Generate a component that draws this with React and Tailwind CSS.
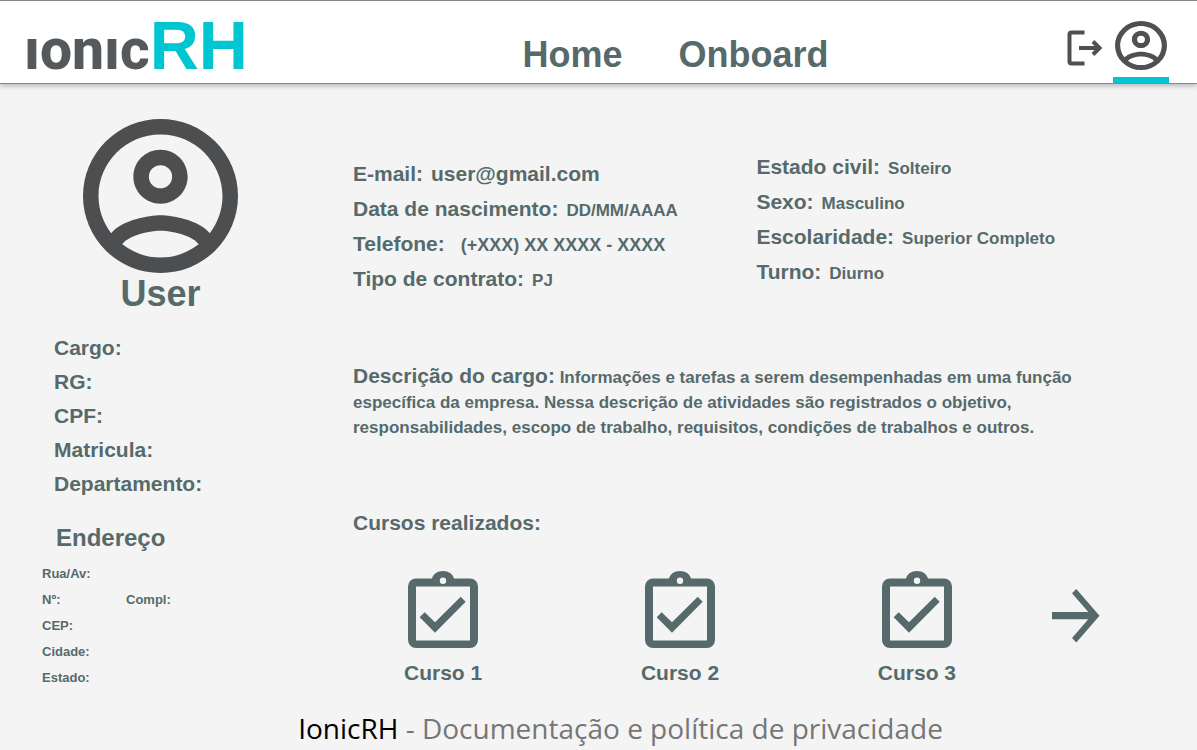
const profileFields = ["Cargo:", "RG:", "CPF:", "Matricula:", "Departamento:"];

const personal = [
  { label: "E-mail:", value: "user@gmail.com", large: true },
  { label: "Data de nascimento:", value: "DD/MM/AAAA" },
  { label: "Telefone:", value: "(+XXX) XX XXXX - XXXX", spaced: true },
  { label: "Tipo de contrato:", value: "PJ" },
];

const social = [
  { label: "Estado civil:", value: "Solteiro" },
  { label: "Sexo:", value: "Masculino" },
  { label: "Escolaridade:", value: "Superior Completo" },
  { label: "Turno:", value: "Diurno" },
];

const courses = ["Curso 1", "Curso 2", "Curso 3"];

function AccountIcon({ className }) {
  return (
    <svg viewBox="2 2 20 20" preserveAspectRatio="none" className={className} fill="currentColor" aria-hidden="true">
      <path d="M12 2A10 10 0 0 0 2 12A10 10 0 0 0 12 22A10 10 0 0 0 22 12A10 10 0 0 0 12 2M7.07 18.28C7.5 17.38 10.12 16.5 12 16.5C13.88 16.5 16.5 17.38 16.93 18.28C15.57 19.36 13.86 20 12 20C10.14 20 8.43 19.36 7.07 18.28M18.36 16.83C16.93 15.09 13.46 14.5 12 14.5C10.54 14.5 7.07 15.09 5.64 16.83C4.62 15.5 4 13.82 4 12C4 7.59 7.59 4 12 4C16.41 4 20 7.59 20 12C20 13.82 19.38 15.5 18.36 16.83M12 6C10.06 6 8.5 7.56 8.5 9.5C8.5 11.44 10.06 13 12 13C13.94 13 15.5 11.44 15.5 9.5C15.5 7.56 13.94 6 12 6M12 11A1.5 1.5 0 0 1 10.5 9.5A1.5 1.5 0 0 1 12 8A1.5 1.5 0 0 1 13.5 9.5A1.5 1.5 0 0 1 12 11Z" />
    </svg>
  );
}

function LogoutIcon() {
  return (
    <svg viewBox="0 0 36 36" className="h-9 w-9" fill="none" stroke="currentColor" strokeWidth="4" aria-hidden="true">
      <path d="M17.500 2.500H4.500Q2.500 2.500 2.500 4.500V31.500Q2.500 33.500 4.500 33.500H17.500" />
      <path d="M12 18H32M26 11.500L32.500 18L26 24.500" />
    </svg>
  );
}

function ClipboardIcon() {
  return (
    <svg viewBox="0 0 70 78" className="h-[78px] w-[70px]" fill="currentColor" aria-hidden="true">
      <path
        fillRule="evenodd"
        d="M8 7.500H24C25 3 29.500 0 35 0S45 3 46 7.500H62A8 8 0 0 1 70 15.500V69A8 8 0 0 1 62 77H8A8 8 0 0 1 0 69V15.500A8 8 0 0 1 8 7.500ZM8 15.500V69.500H62V15.500ZM35 6.600A3.200 3.200 0 1 0 35 13A3.200 3.200 0 1 0 35 6.600Z"
      />
      <path d="M11.700 46.300L16.700 41.300L27 51.300L52.700 25.700L57.700 30.700L27 61.700Z" />
    </svg>
  );
}

function ArrowIcon() {
  return (
    <svg viewBox="0 0 48 54" className="h-[54px] w-12" fill="currentColor" aria-hidden="true">
      <path d="M0 23H36.300L20 4.300L24.300 0L47.500 26.700L24.300 53.400L20 49L36.300 30.300H0Z" />
    </svg>
  );
}

function Details({ items }) {
  return (
    <dl className="flex flex-col">
      {items.map((item) => (
        <div key={item.label} className="flex h-[35px] items-baseline gap-2">
          <dt className="text-[21px] leading-9">{item.label}</dt>
          <dd className={item.large ? "text-[21px]" : item.spaced ? "pl-2 text-[18px]" : "text-[17px]"}>{item.value}</dd>
        </div>
      ))}
    </dl>
  );
}

export default function App() {
  return (
    <div className="flex min-h-screen flex-col bg-[#f4f4f4] font-['Liberation_Sans',Arial,sans-serif] font-bold text-[#566a6b]">
      <header className="flex h-[84px] items-center border-y border-t-[#888] border-b-[#888] bg-white pr-7 pl-6 shadow-[0_2px_5px_rgba(0,0,0,0.25)]">
        <a href="#home" aria-label="ionicRH" className="flex items-baseline pt-1.5 leading-none">
          <span className="font-[Roboto,sans-serif] text-[57px] font-extrabold text-[#55595c]">ıonıc</span>
          <span className="text-[68px] text-[#00c6d1]">RH</span>
        </a>
        <nav className="flex flex-1 justify-center gap-14 pt-[26px] pl-9 text-[36px] leading-none">
          <a href="#home">Home</a>
          <a href="#onboard">Onboard</a>
        </nav>
        <div className="flex items-center gap-2.5 self-stretch text-[#4f5052]">
          <button type="button" aria-label="Sair" className="pt-3">
            <LogoutIcon />
          </button>
          <button type="button" aria-label="Perfil" className="flex w-14 flex-col items-center self-stretch border-b-[6px] border-[#00c6d1] pt-5">
            <AccountIcon className="h-[49px] w-[52px] text-[#4f5052]" />
          </button>
        </div>
      </header>

      <div className="flex flex-1">
        <aside className="w-[353px] shrink-0 pt-[35px] pl-[42px]">
          <div className="flex w-[237px] flex-col items-center">
            <AccountIcon className="h-[154px] w-[155px] text-[#4d4e50]" />
            <h1 className="text-[36px] leading-[42px]">User</h1>
          </div>
          <ul className="pt-4 pl-3 text-[21px] leading-[34px]">
            {profileFields.map((field) => (
              <li key={field}>{field}</li>
            ))}
          </ul>
          <h2 className="pt-[21px] pl-3.5 text-2xl leading-8">Endereço</h2>
          <ul className="pt-[7px] text-[13px] leading-[26px]">
            <li>Rua/Av:</li>
            <li className="flex">
              <span className="w-[84px]">Nº:</span>
              <span>Compl:</span>
            </li>
            <li>CEP:</li>
            <li>Cidade:</li>
            <li>Estado:</li>
          </ul>
        </aside>

        <main className="flex-1 pr-[97px]">
          <section className="grid grid-cols-[54%_46%] pt-[65px]">
            <div className="pt-[7px]">
              <Details items={personal} />
            </div>
            <Details items={social} />
          </section>
          <section className="pt-[67px]">
            <p className="text-[17px] leading-[25px]">
              <strong className="text-[21px] leading-[25px]">Descrição do cargo:</strong> Informações e tarefas a
              serem desempenhadas em uma função específica da empresa. Nessa descrição de atividades são registrados o
              objetivo, responsabilidades, escopo de trabalho, requisitos, condições de trabalhos e outros.
            </p>
          </section>
          <section className="pt-[69px]">
            <h2 className="text-[21px] leading-7">Cursos realizados:</h2>
            <div className="flex items-start pt-[34px] pl-[51px]">
              <ul className="flex flex-1 justify-between">
                {courses.map((course) => (
                  <li key={course} className="flex flex-col items-center gap-2.5 text-[21px] leading-7">
                    <ClipboardIcon />
                    {course}
                  </li>
                ))}
              </ul>
              <button type="button" aria-label="Próximos cursos" className="ml-24 pt-[18px]">
                <ArrowIcon />
              </button>
            </div>
          </section>
        </main>
      </div>

      <footer className="pb-1 pl-11 text-center font-['Open_Sans',sans-serif] text-[28px] leading-9 font-normal text-[#767676]">
        <span className="text-black">IonicRH</span> - <a href="#privacidade">Documentação e política de privacidade</a>
      </footer>
    </div>
  );
}
